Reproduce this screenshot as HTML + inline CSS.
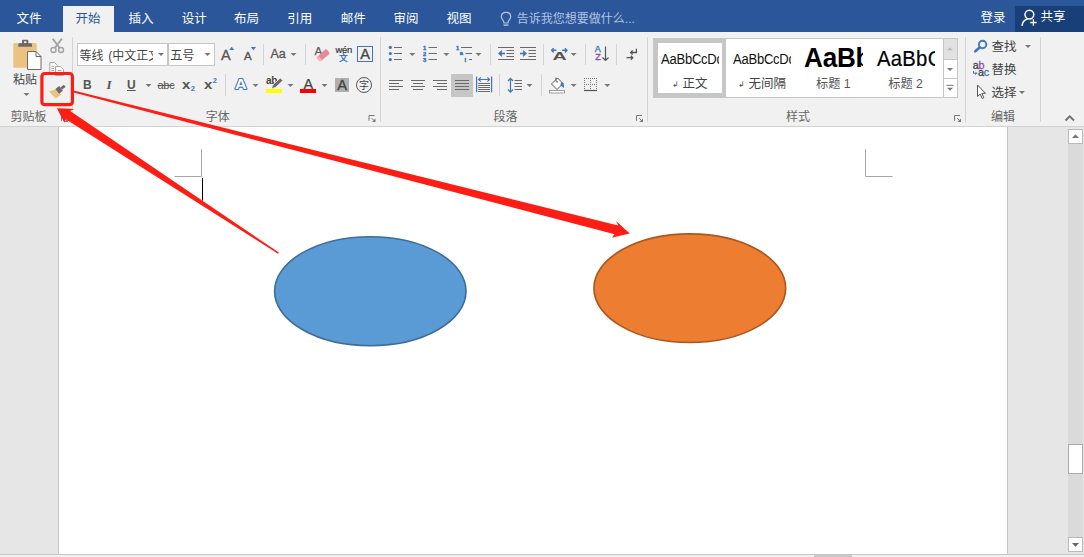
<!DOCTYPE html>
<html lang="zh-CN">
<head>
<meta charset="utf-8">
<title>Word</title>
<style>
html,body{margin:0;padding:0;}
body{width:1084px;height:557px;overflow:hidden;position:relative;background:#e6e6e6;font-family:"Liberation Sans","Noto Sans CJK SC",sans-serif;}
#app{position:absolute;left:0;top:0;width:1084px;height:557px;overflow:hidden;}
.abs{position:absolute;}
.t{position:absolute;white-space:nowrap;line-height:1;font-size:12px;color:#444;}
#topbar{left:0;top:0;width:1084px;height:32px;background:#2b579a;}
.tab{position:absolute;top:12.5px;font-size:12.5px;line-height:13px;color:#fff;white-space:nowrap;}
#tab-active{left:63px;top:6px;width:51px;height:26px;background:#f1f1f1;}
#ribbon{left:0;top:32px;width:1084px;height:94px;background:#f1f1f1;}
#ribbon-line{left:0;top:126px;width:1084px;height:1px;background:#d2d2d2;}
#docarea{left:0;top:127px;width:1084px;height:427px;background:#e6e6e6;}
#page{left:58px;top:127px;width:950px;height:427px;background:#fff;border-left:1px solid #c6c6c6;border-right:1px solid #c6c6c6;box-sizing:border-box;}
#vtrack{left:1068px;top:129px;width:15px;height:423px;background:#dadada;}
.sbtn{position:absolute;left:1068px;width:15px;height:15px;background:#fff;border:1px solid #b9b9b9;box-sizing:border-box;}
#bottomline{left:0;top:554px;width:1084px;height:1px;background:#c6c6c6;}
#bottombar{left:0;top:555px;width:1084px;height:2px;background:#f0f0f0;}
#hthumb{left:814px;top:555px;width:38px;height:2px;background:#c8c8c8;}
.vsep{position:absolute;width:1px;background:#d4d4d4;}
.glabel{position:absolute;top:110.7px;font-size:12px;line-height:12px;color:#666;white-space:nowrap;}
.box{position:absolute;background:#fff;border:1px solid #c6c6c6;box-sizing:border-box;}
.arr{position:absolute;width:0;height:0;border-left:3px solid transparent;border-right:3px solid transparent;border-top:3px solid #777;}
</style>
</head>
<body>
<div id="app">
<div id="topbar" class="abs"></div>
<div id="tab-active" class="abs"></div>
<div class="tab" style="left:16.4px">文件</div>
<div class="tab" style="left:75.5px;color:#2b579a">开始</div>
<div class="tab" style="left:128.6px">插入</div>
<div class="tab" style="left:181.7px">设计</div>
<div class="tab" style="left:234px">布局</div>
<div class="tab" style="left:287.3px">引用</div>
<div class="tab" style="left:340.8px">邮件</div>
<div class="tab" style="left:393.5px">审阅</div>
<div class="tab" style="left:446.5px">视图</div>
<div class="tab" style="left:516.8px;top:13.3px;font-size:12px;color:#b3c3e0">告诉我您想要做什么...</div>
<div class="tab" style="left:980.5px;top:12.1px;font-size:12.5px">登录</div>
<div class="abs" style="left:1015px;top:6px;width:69px;height:26px;background:#193f78"></div>
<div class="tab" style="left:1040.4px;top:10.9px;font-size:12.5px">共享</div>

<div id="ribbon" class="abs"></div>
<div id="ribbon-line" class="abs"></div>
<div id="docarea" class="abs"></div>
<div id="page" class="abs"></div>
<div id="vtrack" class="abs"></div>
<div class="sbtn" style="top:129px"></div>
<div class="sbtn" style="top:537px"></div>
<div class="abs" style="left:1068px;top:444px;width:15px;height:30px;background:#fff;border:1px solid #ababab;box-sizing:border-box"></div>
<div id="bottomline" class="abs"></div>
<div id="bottombar" class="abs"></div>
<div id="hthumb" class="abs"></div>

<!-- RIBBON-CONTENT -->
<!-- clipboard group -->
<div class="t" style="left:13px;top:74.3px;font-size:12px;color:#444">粘贴</div>
<div class="glabel" style="left:10.5px">剪贴板</div>
<div class="vsep" style="left:72px;top:37px;height:85px"></div>
<!-- font group -->
<div class="box" style="left:77px;top:43px;width:91px;height:23px"></div>
<div class="box" style="left:168px;top:43px;width:47px;height:23px"></div>
<div class="abs" style="left:79px;top:44px;width:74.3px;height:21px;overflow:hidden"><div class="t" style="left:0.6px;top:6.2px;font-size:12px;color:#444;word-spacing:1.4px">等线 (中文正文)</div></div>
<div class="t" style="left:170.2px;top:50.2px;font-size:12.2px;color:#444">五号</div>
<div class="glabel" style="left:205.7px">字体</div>
<div class="vsep" style="left:263px;top:44px;height:21px"></div>
<div class="vsep" style="left:305px;top:44px;height:21px"></div>
<div class="vsep" style="left:225px;top:74px;height:22px"></div>
<div class="vsep" style="left:380px;top:37px;height:85px"></div>
<div class="t" style="left:83px;top:79.3px;font-size:12px;font-weight:bold;color:#555">B</div>
<div class="t" style="left:106.5px;top:78.3px;font-size:13px;font-style:italic;font-family:'Liberation Serif',serif;font-weight:bold;color:#555">I</div>
<div class="t" style="left:127px;top:79.3px;font-size:12px;text-decoration:underline;font-weight:bold;color:#555">U</div>
<div class="t" style="left:157.5px;top:80.3px;font-size:11px;text-decoration:line-through;color:#555;letter-spacing:-0.3px">abc</div>
<div class="t" style="left:182px;top:78.3px;font-size:13px;font-weight:bold;color:#555;transform:scaleX(1.15);transform-origin:0 0">x<span style="font-size:6.5px;color:#3e78ba;position:relative;top:2px;left:0.3px">2</span></div>
<div class="t" style="left:204px;top:78.3px;font-size:13px;font-weight:bold;color:#555;transform:scaleX(1.15);transform-origin:0 0">x<span style="font-size:6.5px;color:#3e78ba;position:relative;top:-6px;left:0.3px">2</span></div>
<div class="t" style="left:221px;top:47.5px;font-size:14.5px;color:#555;-webkit-text-stroke:0.35px #555">A</div>
<div class="t" style="left:244px;top:50.6px;font-size:10.8px;color:#555;-webkit-text-stroke:0.35px #555;transform:scaleX(1.06);transform-origin:0 0">A</div>
<div class="t" style="left:270.5px;top:48.3px;font-size:12.5px;color:#555;-webkit-text-stroke:0.3px #555">Aa</div>
<div class="t" style="left:335.6px;top:44.9px;font-size:9.4px;color:#333;letter-spacing:-0.35px;-webkit-text-stroke:0.2px #333">wén</div>
<div class="t" style="left:339px;top:54.4px;font-size:8.8px;color:#3e78ba;font-weight:bold">文</div>
<div class="abs" style="left:357px;top:46px;width:16px;height:16px;border:1px solid #3e78ba;box-sizing:border-box"></div>
<div class="t" style="left:360.2px;top:46.7px;font-size:14.6px;color:#444;-webkit-text-stroke:0.35px #444">A</div>
<div class="t" style="left:266px;top:75.8px;font-size:10px;color:#444;font-weight:bold;letter-spacing:-0.3px">ab</div>
<div class="abs" style="left:266px;top:89px;width:16px;height:4px;background:#ffff00"></div>
<div class="t" style="left:303.5px;top:77px;font-size:14.5px;color:#444;-webkit-text-stroke:0.25px #444">A</div>
<div class="abs" style="left:300px;top:89px;width:16px;height:4px;background:#ff0000"></div>
<div class="abs" style="left:335px;top:78px;width:14px;height:14px;background:#b0b0b0"></div>
<div class="t" style="left:337.3px;top:77.8px;font-size:14.8px;color:#444;-webkit-text-stroke:0.35px #444">A</div>
<div class="abs" style="left:356px;top:77px;width:16px;height:16px;border:1px solid #555;border-radius:50%;box-sizing:border-box"></div>
<div class="t" style="left:359px;top:81px;font-size:10px;color:#444">字</div>
<!-- paragraph group -->
<div class="vsep" style="left:490px;top:44px;height:21px"></div>
<div class="vsep" style="left:543px;top:44px;height:21px"></div>
<div class="vsep" style="left:585px;top:44px;height:21px"></div>
<div class="vsep" style="left:616px;top:44px;height:21px"></div>
<div class="vsep" style="left:499px;top:74px;height:22px"></div>
<div class="vsep" style="left:541px;top:74px;height:22px"></div>
<div class="vsep" style="left:647px;top:37px;height:85px"></div>
<div class="abs" style="left:451px;top:74px;width:22px;height:23px;background:#c6c6c6"></div>
<div class="glabel" style="left:493.5px">段落</div>
<div class="t" style="left:594.8px;top:45.2px;font-size:9px;color:#3e78ba;-webkit-text-stroke:0.35px #3e78ba">A</div>
<div class="t" style="left:595.2px;top:53.3px;font-size:9px;color:#8d52a8;-webkit-text-stroke:0.35px #8d52a8">Z</div>
<!-- styles group -->
<div class="box" style="left:653px;top:38px;width:305px;height:60px;border-color:#c6c6c6"></div>
<div class="abs" style="left:654px;top:39px;width:72px;height:57.5px;border:4px solid #c6c6c6;box-sizing:border-box;background:#fff"></div>
<div class="abs" style="left:660px;top:50px;width:59px;height:18px;overflow:hidden"><div class="t" style="left:0.5px;top:1.7px;font-size:14px;color:#111;letter-spacing:-0.25px;transform:scaleX(0.93);transform-origin:0 0">AaBbCcDd</div></div>
<div class="t" style="left:672px;top:77.5px;font-size:12.5px;color:#444"><span style="font-size:8px;position:relative;top:-1px">↲</span> 正文</div>
<div class="abs" style="left:732px;top:50px;width:59px;height:18px;overflow:hidden"><div class="t" style="left:0.5px;top:1.7px;font-size:14px;color:#111;letter-spacing:-0.25px;transform:scaleX(0.93);transform-origin:0 0">AaBbCcDd</div></div>
<div class="t" style="left:738px;top:77.5px;font-size:12.5px;color:#444"><span style="font-size:8px;position:relative;top:-1px">↲</span> 无间隔</div>
<div class="abs" style="left:803px;top:40px;width:60px;height:32px;overflow:hidden"><div class="t" style="left:1.3px;top:2.5px;font-size:28.5px;font-weight:bold;color:#000;letter-spacing:-0.2px;transform:scaleX(0.915);transform-origin:0 0">AaBb</div></div>
<div class="t" style="left:816px;top:77.5px;font-size:12.2px;color:#555">标题 1</div>
<div class="abs" style="left:875px;top:42px;width:60px;height:30px;overflow:hidden"><div class="t" style="left:2px;top:6.2px;font-size:21.2px;color:#000;letter-spacing:0.3px;-webkit-text-stroke:0.2px #000;transform:scaleX(0.955);transform-origin:0 0">AaBbC</div></div>
<div class="t" style="left:888.3px;top:77.5px;font-size:12.2px;color:#555">标题 2</div>
<div class="abs" style="left:943px;top:39px;width:14px;height:21px;background:#e1e1e1;border-left:1px solid #c6c6c6;border-bottom:1px solid #c6c6c6;box-sizing:border-box"></div>
<div class="abs" style="left:943px;top:60px;width:14px;height:19px;background:#fff;border-left:1px solid #c6c6c6;border-bottom:1px solid #c6c6c6;box-sizing:border-box"></div>
<div class="abs" style="left:943px;top:79px;width:14px;height:18px;background:#fff;border-left:1px solid #c6c6c6;box-sizing:border-box"></div>
<div class="glabel" style="left:786px">样式</div>
<div class="vsep" style="left:965px;top:37px;height:85px"></div>
<!-- editing group -->
<div class="t" style="left:991.5px;top:41.3px;font-size:12.5px;color:#444">查找</div>
<div class="t" style="left:991.5px;top:64.3px;font-size:12.5px;color:#444">替换</div>
<div class="t" style="left:991.5px;top:87.3px;font-size:12.5px;color:#444">选择</div>
<div class="t" style="left:972.8px;top:60px;font-size:10.8px;color:#444;-webkit-text-stroke:0.3px;letter-spacing:-0.2px">a<span style="color:#8d52a8">b</span></div>
<div class="t" style="left:978px;top:67.3px;font-size:10.8px;color:#444;-webkit-text-stroke:0.3px;letter-spacing:-0.2px">a<span style="color:#3e78ba">c</span></div>
<div class="glabel" style="left:991px">编辑</div>
<div class="vsep" style="left:1040px;top:37px;height:85px"></div>


<!-- OVERLAY-SVG -->
<svg class="abs" style="left:0;top:0" width="1084" height="557" viewBox="0 0 1084 557">
<defs>
<path id="dd" d="M-3,-1.5 L3,-1.5 L0,1.5 Z" fill="#777"/>
<g id="launcher" fill="none" stroke="#777" stroke-width="1"><path d="M0.5,5.8 L0.5,0.5 L6,0.5"/><path d="M3.2,3.2 L5.5,5.5"/><path d="M7,3.4 L7,7 L3.4,7 Z" fill="#777" stroke="none"/></g>
</defs>
<!-- tell me bulb -->
<g fill="none" stroke="#b3c3e0" stroke-width="1.2"><path d="M504,23 C504,20 501.3,19.5 501.3,16.8 C501.3,14 503.3,12.4 506,12.4 C508.7,12.4 510.7,14 510.7,16.8 C510.7,19.5 508,20 508,23 Z"/><path d="M503.5,25.1 L508.5,25.1" stroke-width="1.4"/></g>
<!-- share icon -->
<g fill="none" stroke="#fff" stroke-width="1.5"><circle cx="1029.4" cy="14.6" r="4.4"/><path d="M1022,25.8 C1022.5,21.5 1025.3,19.6 1027.6,19"/><path d="M1033.4,19.3 L1033.4,25.7 M1030.2,22.5 L1036.6,22.5" stroke-width="1.3"/></g>
<!-- paste icon -->
<rect x="13.3" y="43" width="23.4" height="24.8" rx="1.5" fill="#eac282"/>
<path d="M18.3,46.8 L18.3,44.3 Q18.3,43.3 19.3,43.3 L22,43.3 L22,41 Q22,39.8 23.2,39.8 L27.2,39.8 Q28.4,39.8 28.4,41 L28.4,43.3 L31,43.3 Q32,43.3 32,44.3 L32,46.8 Z M24,41.3 L24,43 L26.4,43 L26.4,41.3 Z" fill="#6a6a6a" fill-rule="evenodd"/>
<path d="M27.5,51.5 L36,51.5 L41,56.5 L41,69.5 L27.5,69.5 Z" fill="#fff" stroke="#6a6a6a" stroke-width="1"/>
<path d="M36,51.5 L36,56.5 L41,56.5" fill="none" stroke="#6a6a6a" stroke-width="1"/>
<use href="#dd" x="26.5" y="94.5"/>
<!-- scissors (disabled) -->
<g fill="none" stroke="#a3a3a3" stroke-width="1.4"><circle cx="53.5" cy="50" r="2.5"/><circle cx="61" cy="50" r="2.5"/><path d="M54.8,48 L61.9,38.6 M59.7,48 L52.6,38.6" stroke-width="1.8"/></g>
<!-- copy (disabled) -->
<g fill="#fafafa" stroke="#a6a6a6" stroke-width="1"><path d="M49.8,73.5 L49.8,62.5 L54.5,62.5 L57.5,65.5 L57.5,73.5"/><path d="M55.5,75.5 L55.5,66.5 L60.5,66.5 L63.5,69.5 L63.5,75.5 Z"/><path d="M51.5,66.5 L54,66.5 M51.5,68.5 L54,68.5 M51.5,70.5 L54,70.5 M57.5,70.5 L61.5,70.5 M57.5,72.5 L61.5,72.5" stroke-width="1"/></g>
<!-- format painter -->
<path d="M49,91.6 L56.2,89 L61.4,94.8 L55.6,98.4 Z" fill="#eac282"/>
<path d="M55.4,88.9 L59.2,86.1 L62.9,90.8 L59.1,93.7 Z" fill="#6a6a6a"/>
<path d="M60.4,87.4 L63.9,84.7 L65.6,86.9 L62.1,89.6 Z" fill="#6a6a6a"/>
<!-- launchers -->
<use href="#launcher" x="61" y="115"/>
<use href="#launcher" x="368.5" y="115"/>
<use href="#launcher" x="636" y="115"/>
<use href="#launcher" x="954" y="115"/>
<!-- font dropdown arrows -->
<use href="#dd" x="161" y="54.5"/><use href="#dd" x="207.5" y="54.5"/>
<use href="#dd" x="148.5" y="85.5"/>
<use href="#dd" x="293.5" y="54.5"/>
<use href="#dd" x="255.5" y="85.5"/><use href="#dd" x="290.5" y="85.5"/><use href="#dd" x="324.5" y="85.5"/>
<!-- grow/shrink triangles -->
<path d="M229.2,50.1 L231.7,46.8 L234.2,50.1 Z" fill="#3e78ba"/>
<path d="M250.8,46.9 L256,46.9 L253.4,50.2 Z" fill="#3e78ba"/>
<!-- eraser -->
<text x="314.6" y="55.2" font-family="Liberation Sans, sans-serif" font-size="11.7" fill="#5a5a5a" stroke="#5a5a5a" stroke-width="0.25">A</text>
<path d="M316.5,57.5 L325,49.5 Q326,48.8 326.8,49.6 L329.3,52.6 Q329.8,53.4 329,54.2 L321,61 Q320,61.6 319.2,60.8 Z" fill="#e8899a"/>
<path d="M316.5,57.5 L319.2,60.8 Q320,61.6 321,61 L322.3,59.9 L318.2,55.9 Z" fill="#f3b6c0"/>
<text x="235.1" y="89.4" font-family="Liberation Sans, sans-serif" font-size="15.5" font-weight="bold" fill="#fff" stroke="#3e78ba" stroke-width="2.1" stroke-linejoin="round" paint-order="stroke fill" textLength="11.6" lengthAdjust="spacingAndGlyphs">A</text>
<!-- highlighter pen -->
<path d="M271.8,87.6 L273.2,84.6 L280.3,78 L282.9,80.6 L275.8,87.2 L272.6,88.4 Z" fill="#6a6a6a" stroke="#f1f1f1" stroke-width="0.8"/>
<!-- bullets -->
<g fill="#3e78ba"><circle cx="390.3" cy="47.4" r="1.6"/><circle cx="390.3" cy="53.5" r="1.6"/><circle cx="390.3" cy="59.6" r="1.6"/></g>
<g stroke="#6a6a6a" stroke-width="1"><path d="M394,47.5 L402,47.5 M394,53.5 L402,53.5 M394,59.5 L402,59.5"/><path d="M428.5,47.5 L437,47.5 M428.5,53.5 L437,53.5 M428.5,59.5 L437,59.5"/></g>
<use href="#dd" x="412.3" y="54.5"/><use href="#dd" x="446.4" y="54.5"/><use href="#dd" x="478.5" y="54.5"/>
<g font-family="Liberation Sans, sans-serif" font-size="5.8" font-weight="bold" fill="#3470b5" stroke="#3470b5" stroke-width="0.35"><text x="422.9" y="50">1</text><text x="422.9" y="56.1">2</text><text x="422.9" y="62.2">3</text><text x="455.9" y="50">1</text><text x="459.7" y="54.8">a</text><text x="464.6" y="61.9">i</text></g>
<g stroke="#6a6a6a" stroke-width="1"><path d="M461,47.5 L472,47.5 M465.5,53.5 L472,53.5 M469,59.5 L472,59.5"/></g>
<!-- indent icons -->
<g stroke="#6a6a6a" stroke-width="1"><path d="M498,47.5 L514,47.5 M506.5,50.5 L514,50.5 M506.5,53.5 L514,53.5 M506.5,56.5 L514,56.5 M498,59.5 L514,59.5"/><path d="M520,47.5 L536,47.5 M528.5,50.5 L536,50.5 M528.5,53.5 L536,53.5 M528.5,56.5 L536,56.5 M520,59.5 L536,59.5"/></g>
<g fill="#3e78ba" stroke="#3e78ba" stroke-width="1.6"><path d="M505,53.5 L500,53.5" fill="none"/><path d="M520,53.5 L525,53.5" fill="none"/><path d="M498.3,53.5 L501.6,50.6 L501.6,56.4 Z" stroke-width="0.6"/><path d="M526.7,53.5 L523.4,50.6 L523.4,56.4 Z" stroke-width="0.6"/></g>
<!-- asian layout -->
<text x="552.6" y="59.6" font-family="Liberation Sans, sans-serif" font-size="10.4" font-weight="bold" fill="#555" textLength="14.2" lengthAdjust="spacingAndGlyphs">A</text>
<g fill="none" stroke="#3e78ba" stroke-width="1.4"><path d="M551.6,50.3 L556.4,50.3 M553.7,48.2 L551.6,50.3 L553.7,52.4"/><path d="M562.2,50.3 L567,50.3 M564.9,48.2 L567,50.3 L564.9,52.4"/></g>
<use href="#dd" x="573.6" y="54.5"/>
<!-- sort arrow -->
<g fill="none" stroke="#555" stroke-width="1.2"><path d="M605.5,46.5 L605.5,60.5 M602.5,57.5 L605.5,60.5 L608.5,57.5"/></g>
<!-- show marks -->
<g fill="none" stroke="#555" stroke-width="1.3"><path d="M636.4,48.8 L636.4,52.5 L630.6,52.5 M632.6,50.5 L630.6,52.5 L632.6,54.5"/><path d="M626.5,57.7 L632.8,57.7 M630.8,55.7 L632.8,57.7 L630.8,59.7"/></g>
<!-- align icons -->
<g stroke="#6a6a6a" stroke-width="1"><path d="M389,80.5 L403,80.5 M389,83.5 L399,83.5 M389,86.5 L403,86.5 M389,89.5 L399,89.5"/><path d="M411,80.5 L425,80.5 M413,83.5 L423,83.5 M411,86.5 L425,86.5 M413,89.5 L423,89.5"/><path d="M433,80.5 L447,80.5 M437,83.5 L447,83.5 M433,86.5 L447,86.5 M437,89.5 L447,89.5"/><path d="M455,80.5 L469,80.5 M455,83.5 L469,83.5 M455,86.5 L469,86.5 M455,89.5 L469,89.5"/></g>
<!-- distributed -->
<g stroke="#3e78ba" stroke-width="1.2" fill="none"><path d="M476.6,76.6 L476.6,92.2 M491.6,76.6 L491.6,92.2"/><path d="M478.6,79.5 L489.6,79.5 M480.8,77.3 L478.6,79.5 L480.8,81.7 M487.4,77.3 L489.6,79.5 L487.4,81.7"/></g>
<g stroke="#6a6a6a" stroke-width="1"><path d="M478.2,83.5 L490,83.5 M478.2,85.5 L490,85.5 M478.2,87.5 L490,87.5 M478.2,89.5 L490,89.5 M478.2,91.5 L490,91.5"/></g>
<!-- line spacing -->
<g stroke="#3e78ba" stroke-width="1.2" fill="none"><path d="M510.5,78.5 L510.5,92 M508,81 L510.5,78.3 L513,81 M508,89.5 L510.5,92.2 L513,89.5"/></g>
<g stroke="#6a6a6a" stroke-width="1"><path d="M514.5,80.5 L522,80.5 M514.5,83.5 L522,83.5 M514.5,86.5 L522,86.5 M514.5,89.5 L522,89.5"/></g>
<use href="#dd" x="529.5" y="85.5"/>
<!-- shading bucket -->
<g fill="#fff" stroke="#555" stroke-width="1"><path d="M551.5,84 L557.5,78 L563,83.5 L557,89.5 Z"/><path d="M556,77.5 L556,81 Q556,82 557,82 L558,82" fill="none"/></g>
<path d="M561,82 Q564.5,82.5 564,88 Q562,86 560.5,85.5 Z" fill="#3e78ba"/>
<rect x="549.5" y="90.5" width="15" height="2.5" fill="#fff" stroke="#888" stroke-width="0.8"/>
<use href="#dd" x="573.6" y="85.5"/>
<!-- borders -->
<g stroke="#777" stroke-width="1" stroke-dasharray="1,1" fill="none"><path d="M584,78.5 L597,78.5 M584.5,78 L584.5,90 M596.5,78 L596.5,90 M590.5,78 L590.5,90 M584,84.5 L597,84.5"/></g>
<path d="M584,90.5 L597,90.5" stroke="#555" stroke-width="1.2"/>
<use href="#dd" x="607.3" y="85.5"/>
<!-- gallery scroll arrows -->
<path d="M947,50.3 L950,47.3 L953,50.3 Z" fill="#bdbdbd"/>
<path d="M947,68 L953,68 L950,71 Z" fill="#777"/>
<path d="M946.5,85.3 L953.5,85.3" stroke="#777" stroke-width="1"/><path d="M947,87.8 L953,87.8 L950,90.8 Z" fill="#777"/>
<!-- find -->
<g fill="none" stroke="#3e78ba" stroke-width="1.9"><circle cx="982.6" cy="44.5" r="3.7"/><path d="M979.6,47.5 L975.3,51.3" stroke-width="2.6" stroke-linecap="round"/></g>
<use href="#dd" x="1028" y="46.5"/>
<path d="M973.5,71 L973.5,73.3 L976.8,73.3 M975.3,71.8 L976.8,73.3 L975.3,74.8" fill="none" stroke="#3e78ba" stroke-width="1"/>
<!-- select cursor -->
<path d="M977.5,85 L977.5,96.5 L980.2,94 L982.2,98.5 L983.8,97.8 L981.8,93.3 L985.5,93.3 Z" fill="#fff" stroke="#555" stroke-width="1" stroke-linejoin="round"/>
<use href="#dd" x="1022" y="92.5"/>
<!-- collapse caret -->
<path d="M1065.5,120.5 L1069.7,116.3 L1074,120.5" fill="none" stroke="#727272" stroke-width="2"/>
<!-- scrollbar arrows -->
<path d="M1072,138 L1075.5,134.2 L1079,138 Z" fill="#777"/>
<path d="M1072,543 L1079,543 L1075.5,546.8 Z" fill="#666"/>
<!-- page margin marks and caret -->
<g stroke="#a6a6a6" stroke-width="1" fill="none"><path d="M201.5,149 L201.5,176.5 L174.5,176.5"/><path d="M865.5,149 L865.5,176.5 L892.5,176.5"/></g>
<path d="M202.5,178 L202.5,200.5" stroke="#000" stroke-width="1"/>
<!-- shapes -->
<ellipse cx="370.3" cy="291.2" rx="95.7" ry="54.5" fill="#5b9bd5" stroke="#3f6d98" stroke-width="1.6"/>
<ellipse cx="689.8" cy="288.2" rx="95.9" ry="54.3" fill="#ed7d31" stroke="#aa571f" stroke-width="1.6"/>
<!-- red annotations -->
<rect x="41.9" y="73.5" width="30.5" height="31.2" rx="2.8" fill="none" stroke="#fc1e14" stroke-width="3.2"/>
<path d="M56.9,108.3 L74.1,108.9 L70.1,111.1 L278.9,252.5 L278.1,253.7 L65.8,119.2 L64.4,122.7 Z" fill="#fc1e14"/>
<path d="M73.6,90.6 L618.2,225.6 L616.1,220.9 L629.7,233.4 L611.8,237.7 L614.6,234.3 L73.6,92.4 Z" fill="#fc1e14"/>
</svg>

</div>
</body>
</html>
